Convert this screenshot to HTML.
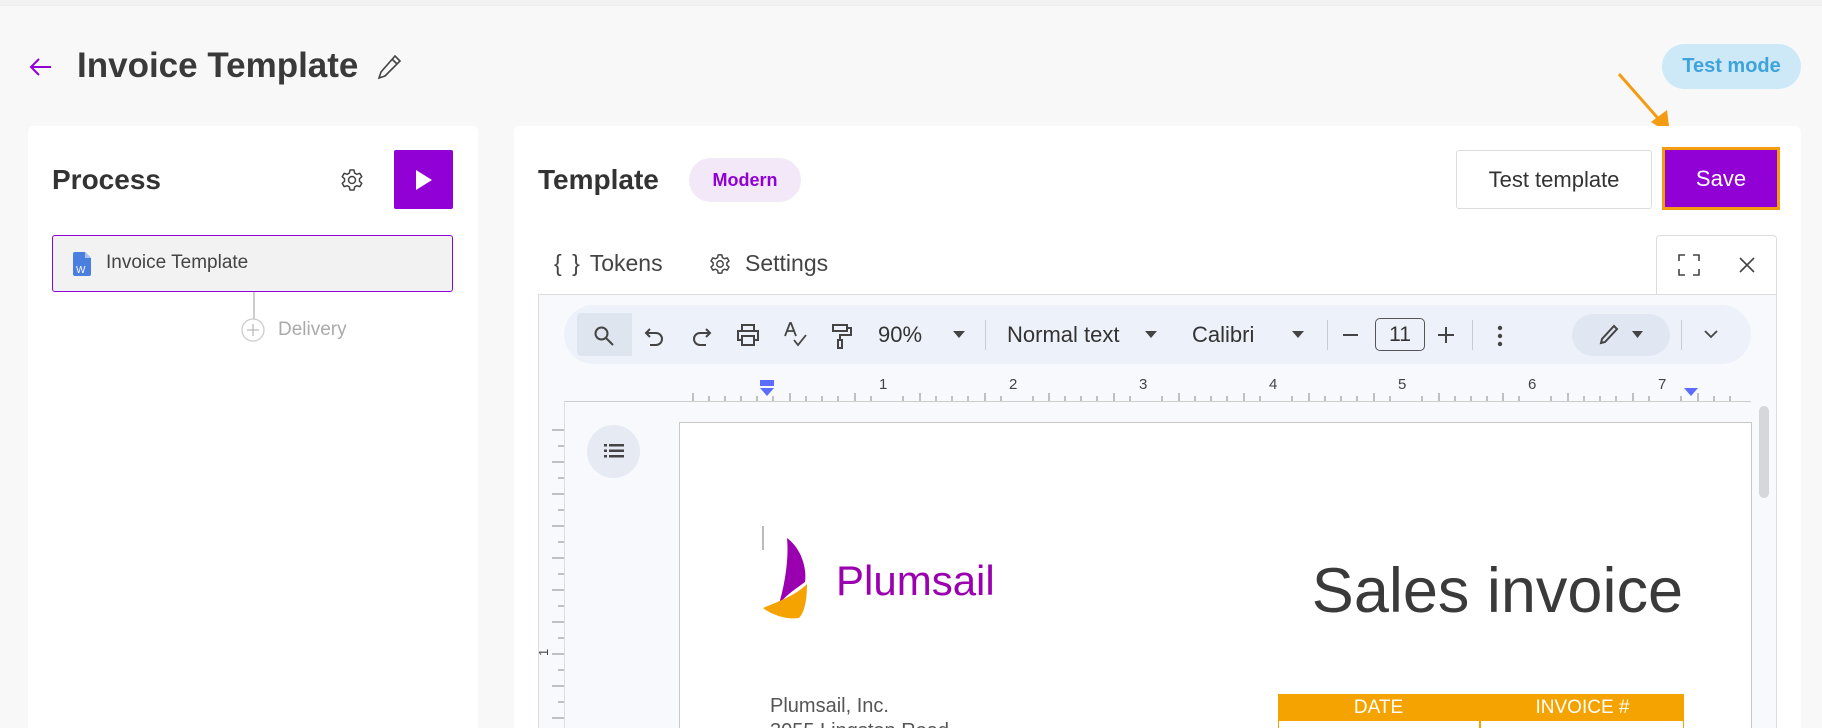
<!DOCTYPE html>
<html style="width:1822px;height:728px;overflow:hidden"><head><meta charset="utf-8"><style>
*{box-sizing:border-box;margin:0;padding:0}
body{width:1822px;height:728px;overflow:hidden;background:#f8f8f8;font-family:"Liberation Sans",sans-serif;position:relative;color:#333}
.a{position:absolute}
.panel{background:#fff;border-radius:6px}
svg{position:absolute;overflow:visible}
.tb{font-size:22px;color:#333;top:335px;transform:translateY(-50%);white-space:nowrap}
.sep{width:1px;height:30px;background:#c8ccd2;top:320px}
</style></head><body>
<div class="a" style="left:0;top:0;width:1822px;height:6px;background:#f2f2f2;border-bottom:1px solid #ececec"></div>
<svg style="left:29px;top:57px" width="24" height="20" viewBox="0 0 24 20"><path d="M22 10H3M10 2L2 10l8 8" fill="none" stroke="#9100d4" stroke-width="2"/></svg>
<div class="a" style="left:77px;top:46px;font-size:35px;font-weight:bold;color:#3a3a3a">Invoice Template</div>
<svg style="left:378px;top:54px" width="24" height="26" viewBox="0 0 24 26"><path d="M17 2l5 5L7 22l-6 2 2-6z M14 5l5 5" fill="none" stroke="#444" stroke-width="1.6"/></svg>
<div class="a" style="left:1662px;top:44px;width:139px;height:45px;border-radius:23px;background:#cde9f8;color:#3ea3dc;font-size:20px;font-weight:bold;text-align:center;line-height:45px">Test mode</div>
<svg style="left:1617px;top:72px" width="56" height="60"><path d="M2 2L46 52" stroke="#f39c12" stroke-width="3"/><path d="M53 62L34 50 50 38z" fill="#f39c12"/></svg>

<div class="a panel" style="left:28px;top:126px;width:450px;height:602px;border-radius:6px 6px 0 0"></div>
<div class="a" style="left:52px;top:164px;font-size:28px;font-weight:bold;color:#333">Process</div>
<svg style="left:340px;top:168px" width="24" height="24" viewBox="0 0 24 24"><circle cx="12" cy="12" r="3.5" fill="none" stroke="#444" stroke-width="1.5"/><path d="M10 2h4l.6 3 2.3 1.3 2.9-1 2 3.4-2.3 2v2.6l2.3 2-2 3.4-2.9-1-2.3 1.3L14 22h-4l-.6-3-2.3-1.3-2.9 1-2-3.4 2.3-2v-2.6l-2.3-2 2-3.4 2.9 1L9.4 5z" fill="none" stroke="#444" stroke-width="1.5" stroke-linejoin="round"/></svg>
<div class="a" style="left:394px;top:150px;width:59px;height:59px;background:#9100d4;border-radius:2px"></div>
<svg style="left:415px;top:169px" width="18" height="22"><path d="M1 1L17 11 1 21z" fill="#fff"/></svg>
<div class="a" style="left:52px;top:235px;width:401px;height:57px;background:#f2f2f2;border:1.5px solid #9100d4;border-radius:3px"></div>
<svg style="left:73px;top:252px" width="18" height="24"><path d="M0 2a2 2 0 0 1 2-2h10l6 6v16a2 2 0 0 1-2 2H2a2 2 0 0 1-2-2z" fill="#4a7fe0"/><path d="M12 0v6h6" fill="#a9c3f2"/><text x="3" y="21" font-size="10" fill="#fff" font-family="Liberation Sans">W</text></svg>
<div class="a" style="left:106px;top:252px;font-size:19px;color:#444">Invoice Template</div>
<div class="a" style="left:253px;top:292px;width:1.5px;height:27px;background:#ccc"></div>
<svg style="left:241px;top:318px" width="24" height="24"><circle cx="12" cy="12" r="11" fill="#fff" stroke="#ccc" stroke-width="1.3"/><path d="M12 6v12M6 12h12" stroke="#bbb" stroke-width="1.3"/></svg>
<div class="a" style="left:278px;top:319px;font-size:19px;color:#aaa">Delivery</div>

<div class="a panel" style="left:514px;top:126px;width:1287px;height:602px;border-radius:6px 6px 0 0"></div>
<div class="a" style="left:538px;top:164px;font-size:28px;font-weight:bold;color:#333">Template</div>
<div class="a" style="left:689px;top:158px;width:112px;height:44px;border-radius:22px;background:#f3e8f8;color:#9100d4;font-size:18px;font-weight:bold;text-align:center;line-height:44px">Modern</div>
<div class="a" style="left:1456px;top:150px;width:196px;height:59px;border:1px solid #ddd;border-radius:3px;font-size:22px;text-align:center;line-height:57px;color:#333">Test template</div>
<div class="a" style="left:1662px;top:147px;width:118px;height:63px;border:3px solid #f39c12;background:#9100d4;color:#fff;font-size:22px;text-align:center;line-height:57px">Save</div>
<div class="a" style="left:554px;top:250px;font-size:23px;color:#444;word-spacing:4px">{ } Tokens</div>
<svg style="left:709px;top:253px" width="22" height="22" viewBox="0 0 24 24"><circle cx="12" cy="12" r="3.5" fill="none" stroke="#444" stroke-width="1.6"/><path d="M10 2h4l.6 3 2.3 1.3 2.9-1 2 3.4-2.3 2v2.6l2.3 2-2 3.4-2.9-1-2.3 1.3L14 22h-4l-.6-3-2.3-1.3-2.9 1-2-3.4 2.3-2v-2.6l-2.3-2 2-3.4 2.9 1L9.4 5z" fill="none" stroke="#444" stroke-width="1.6" stroke-linejoin="round"/></svg>
<div class="a" style="left:745px;top:250px;font-size:23px;color:#444">Settings</div>
<div class="a" style="left:1656px;top:235px;width:121px;height:62px;border:1px solid #ddd;border-bottom:none;border-radius:4px 4px 0 0;background:#fff"></div>
<svg style="left:1678px;top:254px" width="22" height="22"><path d="M1 7V1h6M15 1h6v6M21 15v6h-6M7 21H1v-6" fill="none" stroke="#444" stroke-width="1.6"/></svg>
<svg style="left:1739px;top:257px" width="16" height="16"><path d="M1 1l14 14M15 1L1 15" stroke="#444" stroke-width="1.6"/></svg>

<div class="a" style="left:538px;top:294px;width:1239px;height:434px;border:1px solid #ddd;border-bottom:none;background:#f8f9fc"></div>
<div class="a" style="left:564px;top:305px;width:1187px;height:59px;border-radius:30px;background:#edf2fa"></div>
<div class="a" style="left:577px;top:313px;width:55px;height:43px;border-radius:4px 0 0 4px;background:#dfe5ef"></div>
<svg style="left:593px;top:325px" width="22" height="22"><circle cx="8.5" cy="8.5" r="6" fill="none" stroke="#444" stroke-width="2"/><path d="M13 13l7 7" stroke="#444" stroke-width="2"/></svg>
<svg style="left:645px;top:326px" width="20" height="20"><path d="M5 3L1 7l4 4M1 7h10a6 6 0 0 1 0 12H5" fill="none" stroke="#444" stroke-width="2"/></svg>
<svg style="left:691px;top:326px" width="20" height="20"><path d="M15 3l4 4-4 4M19 7H9a6 6 0 0 0 0 12h6" fill="none" stroke="#444" stroke-width="2"/></svg>
<svg style="left:736px;top:324px" width="24" height="22"><path d="M6 6V1h12v5M6 16H2V7h20v9h-4M6 12h12v9H6z" fill="none" stroke="#444" stroke-width="2"/></svg>
<svg style="left:784px;top:322px" width="24" height="26"><path d="M1 14L6 1h1l5 13M3 9h7M10 18l4 5 8-10" fill="none" stroke="#444" stroke-width="1.8"/></svg>
<svg style="left:831px;top:323px" width="22" height="26"><path d="M2 2h14v6H2zM16 5h4v7H9v5M7 17h4v8H7z" fill="none" stroke="#444" stroke-width="2"/></svg>
<div class="a tb" style="left:878px">90%</div>
<svg style="left:953px;top:331px" width="12" height="7"><path d="M0 0h12L6 7z" fill="#444"/></svg>
<div class="a sep" style="left:985px"></div>
<div class="a tb" style="left:1007px">Normal text</div>
<svg style="left:1145px;top:331px" width="12" height="7"><path d="M0 0h12L6 7z" fill="#444"/></svg>
<div class="a tb" style="left:1192px">Calibri</div>
<svg style="left:1292px;top:331px" width="12" height="7"><path d="M0 0h12L6 7z" fill="#444"/></svg>
<div class="a sep" style="left:1327px"></div>
<div class="a" style="left:1343px;top:334px;width:15px;height:2px;background:#444"></div>
<div class="a" style="left:1375px;top:318px;width:50px;height:33px;border:1.3px solid #555;border-radius:5px;font-size:21px;text-align:center;line-height:31px">11</div>
<svg style="left:1438px;top:327px" width="16" height="16"><path d="M8 0v16M0 8h16" stroke="#444" stroke-width="2"/></svg>
<div class="a sep" style="left:1472px"></div>
<svg style="left:1497px;top:325px" width="6" height="22"><circle cx="3" cy="3" r="2.2" fill="#444"/><circle cx="3" cy="11" r="2.2" fill="#444"/><circle cx="3" cy="19" r="2.2" fill="#444"/></svg>
<div class="a" style="left:1572px;top:314px;width:98px;height:42px;border-radius:21px;background:#e1e7f2"></div>
<svg style="left:1599px;top:324px" width="20" height="22"><path d="M15 2l3 3L6 18l-4 1 1-4z" fill="none" stroke="#444" stroke-width="2"/></svg>
<svg style="left:1632px;top:331px" width="11" height="7"><path d="M0 0h11L5.5 7z" fill="#444"/></svg>
<div class="a sep" style="left:1681px"></div>
<svg style="left:1704px;top:330px" width="14" height="9"><path d="M1 1l6 6 6-6" fill="none" stroke="#444" stroke-width="1.8"/></svg>

<div class="a" style="left:564px;top:374px;width:1187px;height:28px;border-bottom:1px solid #ccc"></div>
<div class="a" style="left:879px;top:376px;font-size:15px;color:#444">1</div>
<div class="a" style="left:1009px;top:376px;font-size:15px;color:#444">2</div>
<div class="a" style="left:1139px;top:376px;font-size:15px;color:#444">3</div>
<div class="a" style="left:1269px;top:376px;font-size:15px;color:#444">4</div>
<div class="a" style="left:1398px;top:376px;font-size:15px;color:#444">5</div>
<div class="a" style="left:1528px;top:376px;font-size:15px;color:#444">6</div>
<div class="a" style="left:1658px;top:376px;font-size:15px;color:#444">7</div>
<svg style="left:0;top:0" width="1822" height="728">
<g stroke="#888" stroke-width="1">
<path d="M693 401v-8M709 401v-5M725 401v-5M741 401v-5M757 401v-5M773 401v-5M790 401v-8M806 401v-5M822 401v-5M838 401v-5M855 401v-8M871 401v-5M903 401v-5M920 401v-8M936 401v-5M952 401v-5M968 401v-5M985 401v-8M1001 401v-5M1033 401v-5M1049 401v-8M1065 401v-5M1081 401v-5M1097 401v-5M1114 401v-8M1130 401v-5M1162 401v-5M1179 401v-8M1195 401v-5M1211 401v-5M1227 401v-5M1244 401v-8M1260 401v-5M1292 401v-5M1309 401v-8M1325 401v-5M1341 401v-5M1357 401v-5M1374 401v-8M1390 401v-5M1422 401v-5M1439 401v-8M1455 401v-5M1471 401v-5M1487 401v-5M1503 401v-8M1519 401v-5M1551 401v-5M1568 401v-8M1584 401v-5M1600 401v-5M1616 401v-5M1633 401v-8M1649 401v-5M1681 401v-5M1698 401v-8M1714 401v-5M1730 401v-5"/>
<path d="M552 430h12M558 446h6M552 462h12M558 478h6M552 494h12M558 510h6M552 526h12M558 542h6M552 558h12M558 574h6M552 590h12M558 606h6M552 622h12M558 638h6M552 654h12M558 670h6M552 686h12M558 702h6M552 718h12"/>
</g>
<rect x="760" y="380" width="14" height="6" fill="#5b6cff"/><path d="M760 388h14l-7 8z" fill="#5b6cff"/>
<path d="M1684 388h14l-7 8z" fill="#5b6cff"/>
<text x="548" y="656" font-size="13" fill="#444" font-family="Liberation Sans" transform="rotate(-90 548 656)">1</text>
</svg>
<div class="a" style="left:564px;top:401px;width:1px;height:327px;background:#ddd"></div>
<div class="a" style="left:587px;top:425px;width:53px;height:53px;border-radius:50%;background:#e6eaf3"></div>
<svg style="left:604px;top:444px" width="20" height="14"><g fill="#444"><rect x="0" y="0" width="3" height="2.5"/><rect x="5" y="0" width="15" height="2.5"/><rect x="0" y="5.5" width="3" height="2.5"/><rect x="5" y="5.5" width="15" height="2.5"/><rect x="0" y="11" width="3" height="2.5"/><rect x="5" y="11" width="15" height="2.5"/></g></svg>
<div class="a" style="left:679px;top:422px;width:1073px;height:310px;background:#fff;border:1px solid #c8c8c8;border-bottom:none"></div>
<div class="a" style="left:1759px;top:406px;width:10px;height:92px;border-radius:5px;background:#d5d7db"></div>
<div class="a" style="left:762px;top:526px;width:2px;height:24px;background:#bbb"></div>
<svg style="left:761px;top:538px" width="62" height="82" viewBox="0 0 62 82"><path d="M26 0C40 10 46 30 44 44C36 50 26 56 18 66C24 46 28 20 26 0z" fill="#9b00b0"/><path d="M46 46C46 60 44 74 38 80 24 82 10 76 2 70 16 64 34 58 46 46z" fill="#f5a300"/></svg>
<div class="a" style="left:836px;top:557px;font-size:42px;color:#9b00b0">Plumsail</div>
<div class="a" style="left:1283px;top:555px;font-size:63px;color:#3a3a3a;width:400px;text-align:right;white-space:nowrap">Sales invoice</div>
<div class="a" style="left:770px;top:695px;font-size:20px;color:#555">Plumsail, Inc.</div>
<div class="a" style="left:770px;top:720px;font-size:20px;color:#555">3055 Lingston Road</div>
<div class="a" style="left:1278px;top:694px;width:406px;height:40px;border:1.5px solid #f5a300"></div>
<div class="a" style="left:1278px;top:694px;width:406px;height:27px;background:#f5a300"></div>
<div class="a" style="left:1479px;top:694px;width:1.5px;height:40px;background:#f5a300"></div>
<div class="a" style="left:1278px;top:697px;width:201px;text-align:center;color:#fff;font-size:19px">DATE</div>
<div class="a" style="left:1481px;top:697px;width:203px;text-align:center;color:#fff;font-size:19px">INVOICE #</div>
</body></html>
